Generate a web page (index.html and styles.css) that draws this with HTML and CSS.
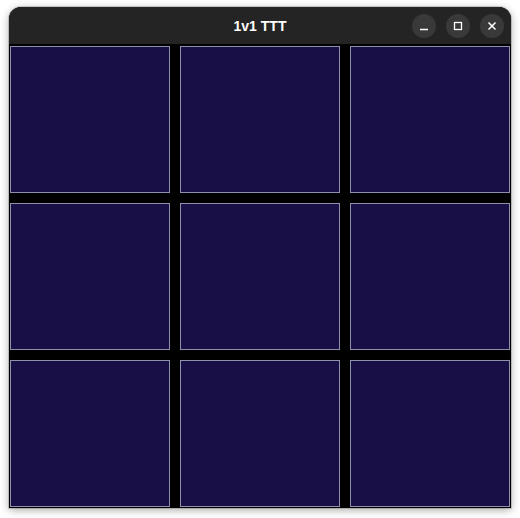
FILE: index.html
```html
<!DOCTYPE html>
<html>
<head>
<meta charset="utf-8">
<link rel="stylesheet" href="styles.css">
</head>
<body>
<div class="window">
  <div class="titlebar">
    <div class="title">1v1 TTT</div>
    <div class="controls">
      <div class="btn"><svg width="24" height="24" viewBox="0 0 24 24"><path d="M8 15.5h8" stroke="#fff" stroke-width="1.3" fill="none"/></svg></div>
      <div class="btn"><svg width="24" height="24" viewBox="0 0 24 24"><rect x="8.5" y="8.5" width="7" height="7" stroke="#fff" stroke-width="1.3" fill="none"/></svg></div>
      <div class="btn"><svg width="24" height="24" viewBox="0 0 24 24"><path d="M8.5 8.5l7 7M15.5 8.5l-7 7" stroke="#fff" stroke-width="1.5" fill="none"/></svg></div>
    </div>
  </div>
  <div class="board">
    <div class="cell"></div><div class="cell"></div><div class="cell"></div>
    <div class="cell"></div><div class="cell"></div><div class="cell"></div>
    <div class="cell"></div><div class="cell"></div><div class="cell"></div>
  </div>
</div>
</body>
</html>
```
FILE: styles.css
```css
html, body { margin: 0; padding: 0; background: #ffffff; }
body { width: 520px; height: 518px; overflow: hidden; font-family: "Liberation Sans", Arial, sans-serif; }
.window {
  width: 502px;
  margin: 7px 0 0 9px;
  border-radius: 12px 12px 0 0;
  background: #000;
  box-shadow: 0 2px 9px rgba(0,0,0,0.35), 0 0 0 1px rgba(0,0,0,0.15);
  overflow: hidden;
}
.titlebar {
  height: 37px;
  background: #242424;
  display: flex;
  align-items: center;
  justify-content: center;
  position: relative;
}
.title { color: #ffffff; font-weight: bold; font-size: 14px; }
.controls {
  position: absolute;
  right: 7px;
  top: 7px;
  display: flex;
  gap: 10px;
}
.btn {
  width: 24px; height: 24px; border-radius: 50%;
  background: #393939;
  display: flex;
}
.board {
  padding: 2px 1px 1px 1px;
  display: grid;
  grid-template-columns: repeat(3, 160px);
  grid-template-rows: repeat(3, 147px);
  gap: 10px;
}
.cell {
  background: #170f45;
  border: 1px solid #8d90aa;
}
```
